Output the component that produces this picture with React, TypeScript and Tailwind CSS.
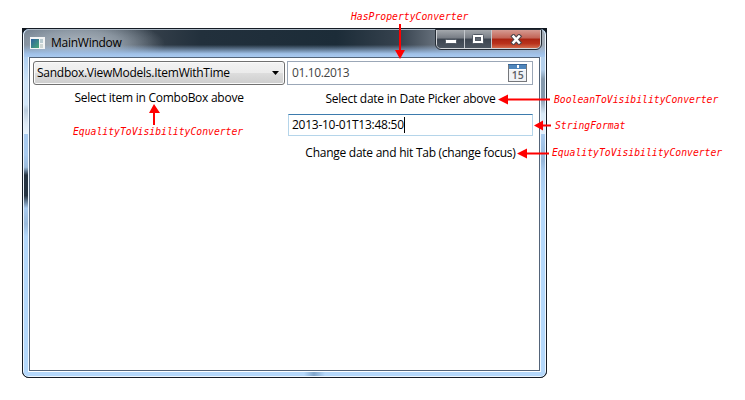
import React from "react";

const ui = "font-['Open_Sans','Noto_Sans',sans-serif] text-[12px] leading-4 whitespace-nowrap";

function Note({ children, className }: { children: string; className: string }) {
  return (
    <span
      className={`absolute font-['DejaVu_Sans_Mono',monospace] italic text-[9.75px] leading-3 whitespace-nowrap text-[#ff0000] ${className}`}
    >
      {children}
    </span>
  );
}

function CalendarIcon() {
  return (
    <svg width="19" height="18" viewBox="0 0 19 18" shapeRendering="crispEdges">
      <rect x="0.5" y="0.5" width="18" height="17" fill="#f0f2f5" stroke="#75777b" />
      <rect x="1" y="1" width="17" height="4" fill="#5087bd" />
      <rect x="0" y="0" width="19" height="1" fill="#376597" />
      <rect x="9" y="1" width="2" height="3" fill="#fff" />
      <rect x="1" y="5" width="17" height="1" fill="#fff" />
      <text x="9.8" y="15.3" textAnchor="middle" fontSize="10.5" fontWeight="600" fontFamily="Open Sans, sans-serif" fill="#5c6066">15</text>
    </svg>
  );
}

function CaptionButtons() {
  return (
    <div className="flex h-[19px] w-[105px] overflow-hidden rounded-b-[5px] border border-t-0 border-[#d3d6da] outline outline-1 outline-[#252c35]">
      <div className="flex w-[28px] items-center justify-center border-r border-[#c4c8cd] bg-[linear-gradient(#a4a8ad_0,#767c84_45%,#3c444f_50%,#4c5560_100%)]">
        <svg width="12" height="5" className="mt-[5px]"><rect x=".5" y=".5" width="11" height="4" rx="1" fill="#fff" stroke="#505863" /></svg>
      </div>
      <div className="flex w-[27px] items-center justify-center border-r border-[#c4c8cd] bg-[linear-gradient(#a4a8ad_0,#767c84_45%,#3c444f_50%,#4c5560_100%)]">
        <svg width="12" height="10">
          <rect x=".5" y=".5" width="11" height="9" rx="1" fill="#fff" stroke="#505863" />
          <rect x="3.5" y="3.5" width="5" height="3" fill="#606872" stroke="#505863" />
        </svg>
      </div>
      <div className="flex flex-1 items-center justify-center bg-[linear-gradient(#d69b92_0,#c26355_45%,#a92412_50%,#b9321c_75%,#d26a4c_100%)]">
        <svg width="13" height="11" viewBox="0 0 13 11">
          <path d="M3.5 2.500l5.500 6M9 2.500L3.500 8.500" stroke="#4e474c" strokeWidth="4.600" strokeLinecap="square" />
          <path d="M3.500 2.500l5.500 6M9 2.500L3.500 8.500" stroke="#fff" strokeWidth="2.500" strokeLinecap="square" />
        </svg>
      </div>
    </div>
  );
}

function AppIcon() {
  return (
    <svg width="15" height="12" viewBox="0 0 15 12" shapeRendering="crispEdges">
      <defs>
        <linearGradient id="app-pane" x1="0" y1="0" x2="1" y2="1">
          <stop offset="0" stopColor="#2d5f9f" />
          <stop offset="1" stopColor="#48a878" />
        </linearGradient>
      </defs>
      <rect width="15" height="12" fill="#f3f4f5" />
      <rect x="1" y="2" width="8" height="9" fill="url(#app-pane)" />
      <rect x="10" y="2" width="3" height="4" fill="#b9cbd1" />
      <rect x="10" y="7" width="3" height="4" fill="#ced6d4" />
    </svg>
  );
}

function Arrows() {
  return (
    <svg className="absolute inset-0" width="745" height="400" fill="#ff0000" stroke="none">
      <path d="M399 24h2v26h4l-5 9-5-9h4z" />
      <path d="M153 125h2v-12h5l-6-9-5 9h4z" />
      <path d="M550 98.500v2h-42v4l-10-5 10-5v4z" />
      <path d="M551 124.500v2h-8v4l-9-5 9-5v4z" />
      <path d="M549 152.500v2h-22v4l-10-5 10-5v4z" />
    </svg>
  );
}

export default function App() {
  return (
    <div className="relative h-[400px] w-[745px] overflow-hidden bg-white pt-7 pl-[22px]">
      <div className="h-[350px] w-[525px] rounded-b-[7px] bg-[#10161e]">
        <div className="flex h-full w-full flex-col overflow-hidden rounded-[7px] border border-[#141b24] bg-[#b5d8fb]">
          <div className="flex min-h-0 flex-1 flex-col rounded-[6px] border border-[#eff7ff] border-t-[#aebac6]">
            <div className="flex h-[27px] shrink-0 justify-between rounded-t-[5px] bg-[linear-gradient(transparent_0,transparent_55%,#9fc0e7_88%,#a9caf0_100%),radial-gradient(85px_26px_at_56px_14px,rgba(200,208,216,.75)_0,rgba(175,186,197,.6)_50%,transparent_100%),linear-gradient(90deg,#687686_0,#59646f_14%,#333e49_25%,#22303c_34%,#1c2c38_60%,#36424e_72%,#7a838e_82%,#a4adb7_100%)]">
              <div className="flex pl-[6px]">
                <div className="pt-[7px]"><AppIcon /></div>
                <span className={`${ui} pt-[5px] pl-[6px] tracking-[-0.26px] text-black`}>MainWindow</span>
              </div>
              <div className="pr-[4px]"><CaptionButtons /></div>
            </div>
            <div className="flex min-h-0 flex-1">
              <div className="w-1 shrink-0 bg-[linear-gradient(#afcff0_0,#cfe5f9_8%,#d3e7f9_15%,#bccddd_17%,#dde9f4_21%,#e8f3fb_24.400%,#a9cbef_24.600%,#a9cbef_31%,#9bbbdc_35%,#263442_37.500%,#263442_44%,#a9cbef_48%,#9bbbdc_53%,#b4d8fb_57%)]" />
              <div className="flex min-w-0 flex-1 border border-[#eff7ff] border-t-0 border-b-white">
                <div className="flex min-w-0 flex-1 border border-[#536479] bg-white">
                  <div className="flex w-[255px] flex-col pt-[3px] pl-[3px]">
                    <div className="flex h-6 w-[252px] items-center justify-between rounded-[3px] border border-[#707070] bg-[linear-gradient(#f3f3f3_0,#ebebeb_50%,#dddddd_51%,#cdcdcd_100%)] pr-[5px] pl-[3px] shadow-[inset_0_0_0_1px_#fafafa]">
                      <span className={`${ui} tracking-[-0.26px]`}>Sandbox.ViewModels.ItemWithTime</span>
                      <svg width="7" height="4"><path d="M0 0h7L3.500 4z" fill="#000" /></svg>
                    </div>
                    <span className={`${ui} mt-[5px] text-center tracking-[-0.26px]`}>Select item in ComboBox above</span>
                  </div>
                  <div className="flex flex-1 flex-col pt-[3px] pr-[6px] pl-[3px]">
                    <div className="-ml-px flex h-6 items-center justify-between border border-[#9ba7b7] pr-[5px] pl-[4px]">
                      <span className={`${ui} tracking-[-0.39px] text-[#444]`}>01.10.2013</span>
                      <CalendarIcon />
                    </div>
                    <span className={`${ui} mt-[6px] text-center tracking-[-0.26px]`}>Select date in Date Picker above</span>
                    <div className="mt-[7px] flex h-[22px] items-center border border-[#b5d5ea] border-t-[#3d7bad] pl-[3px]">
                      <span className={`${ui} tracking-[-0.26px]`}>2013-10-01T13:48:50</span>
                      <span className="h-4 w-px bg-black" />
                    </div>
                    <span className={`${ui} mt-[9px] text-center tracking-[-0.26px]`}>Change date and hit Tab (change focus)</span>
                  </div>
                </div>
              </div>
              <div className="w-1 shrink-0 bg-[linear-gradient(#b4d0ec_0,#b4d0ec_4%,#8499ad_7%,#8499ad_13%,#d8e9f7_18%,#e4f0fa_24.400%,#a9cbef_24.600%,#96b7da_33%,#a9cbef_36%,#b4d8fb_46%)]" />
            </div>
            <div className="h-1 shrink-0 rounded-b-[5px] bg-[linear-gradient(90deg,#b5d8fb_0,#b5d8fb_280px,#7fa5cb_290px,#b5d8fb_301px)]" />
          </div>
        </div>
      </div>
      <Arrows />
      <Note className="top-[11px] left-[351px]">HasPropertyConverter</Note>
      <Note className="top-[126px] left-[73px]">EqualityToVisibilityConverter</Note>
      <Note className="top-[94px] left-[554px]">BooleanToVisibilityConverter</Note>
      <Note className="top-[120px] left-[555px]">StringFormat</Note>
      <Note className="top-[147px] left-[552px]">EqualityToVisibilityConverter</Note>
    </div>
  );
}
